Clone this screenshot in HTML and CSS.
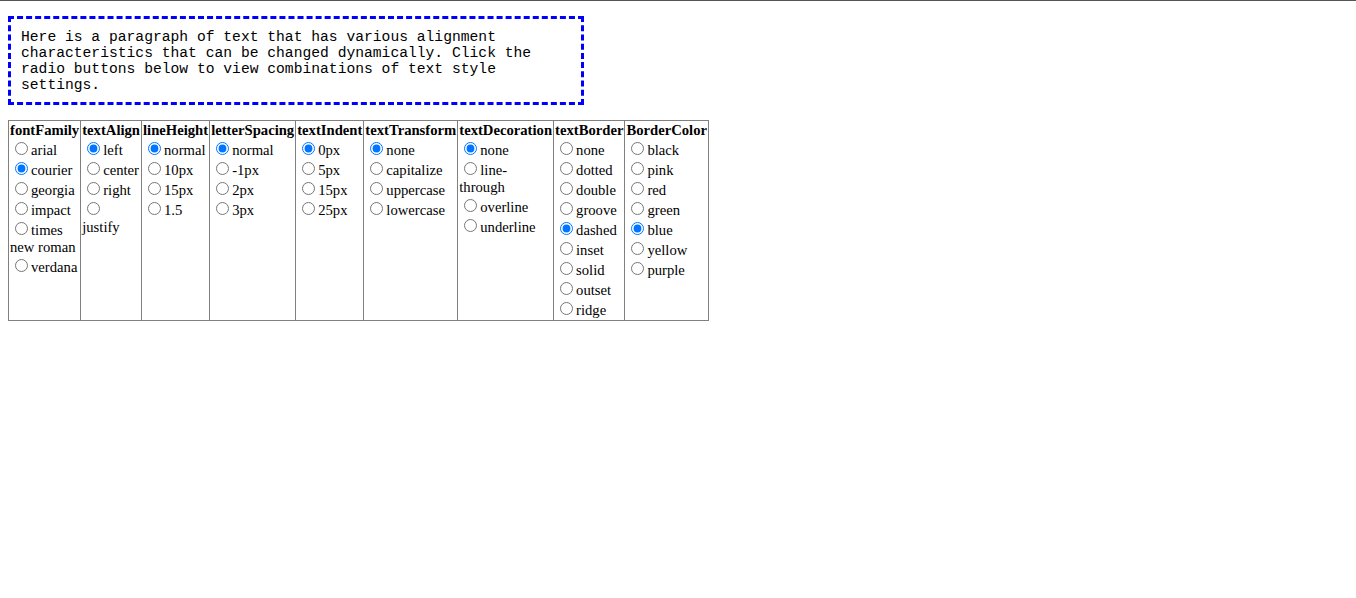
FILE: index.html
```html
<!DOCTYPE html>
<html>
<head>
<meta charset="utf-8">
<link rel="stylesheet" href="styles.css">
</head>
<body>
<div class="topline"></div>
<div class="page">
<div class="sample">Here is a paragraph of text that has various alignment characteristics that can be changed dynamically. Click the radio buttons below to view combinations of text style settings.</div>
<table class="controls">
<tr>
<td><b>fontFamily</b><br><input type="radio" name="ff">arial<br><input type="radio" name="ff" checked>courier<br><input type="radio" name="ff">georgia<br><input type="radio" name="ff">impact<br><input type="radio" name="ff">times new roman<br><input type="radio" name="ff">verdana</td>
<td><b>textAlign</b><br><input type="radio" name="ta" checked>left<br><input type="radio" name="ta">center<br><input type="radio" name="ta">right<br><input type="radio" name="ta">justify</td>
<td><b>lineHeight</b><br><input type="radio" name="lh" checked>normal<br><input type="radio" name="lh">10px<br><input type="radio" name="lh">15px<br><input type="radio" name="lh">1.5</td>
<td><b>letterSpacing</b><br><input type="radio" name="ls" checked>normal<br><input type="radio" name="ls">-1px<br><input type="radio" name="ls">2px<br><input type="radio" name="ls">3px</td>
<td><b>textIndent</b><br><input type="radio" name="ti" checked>0px<br><input type="radio" name="ti">5px<br><input type="radio" name="ti">15px<br><input type="radio" name="ti">25px</td>
<td><b>textTransform</b><br><input type="radio" name="tt" checked>none<br><input type="radio" name="tt">capitalize<br><input type="radio" name="tt">uppercase<br><input type="radio" name="tt">lowercase</td>
<td><b>textDecoration</b><br><input type="radio" name="td" checked>none<br><input type="radio" name="td">line-through<br><input type="radio" name="td">overline<br><input type="radio" name="td">underline</td>
<td><b>textBorder</b><br><input type="radio" name="tb">none<br><input type="radio" name="tb">dotted<br><input type="radio" name="tb">double<br><input type="radio" name="tb">groove<br><input type="radio" name="tb" checked>dashed<br><input type="radio" name="tb">inset<br><input type="radio" name="tb">solid<br><input type="radio" name="tb">outset<br><input type="radio" name="tb">ridge</td>
<td><b>BorderColor</b><br><input type="radio" name="bc">black<br><input type="radio" name="bc">pink<br><input type="radio" name="bc">red<br><input type="radio" name="bc">green<br><input type="radio" name="bc" checked>blue<br><input type="radio" name="bc">yellow<br><input type="radio" name="bc">purple</td>
</tr>
</table>
</div>
</body>
</html>
```
FILE: styles.css
```css
html, body {
  margin: 0;
  padding: 0;
  background: #fff;
  font-family: "Liberation Serif", "Times New Roman", serif;
  font-size: 16px;
  color: #000;
}
.topline {
  border-top: 1px solid #555;
}
.page {
  padding: 15px 8px;
}
.sample {
  width: 550px;
  padding: 10px 10px 9px;
  border: 3px dashed #0000ff;
  font-family: "Liberation Mono", "Courier New", monospace;
  font-size: 14.67px;
  line-height: 16px;
  margin-bottom: 15px;
}
.controls {
  width: min-content;
  border-collapse: collapse;
  border: 1px solid #808080;
  font-size: 14.67px;
}
.controls td {
  border: 1px solid #808080;
  padding: 1px;
  vertical-align: top;
  text-align: left;
}
.controls b {
  font-weight: bold;
}
```
